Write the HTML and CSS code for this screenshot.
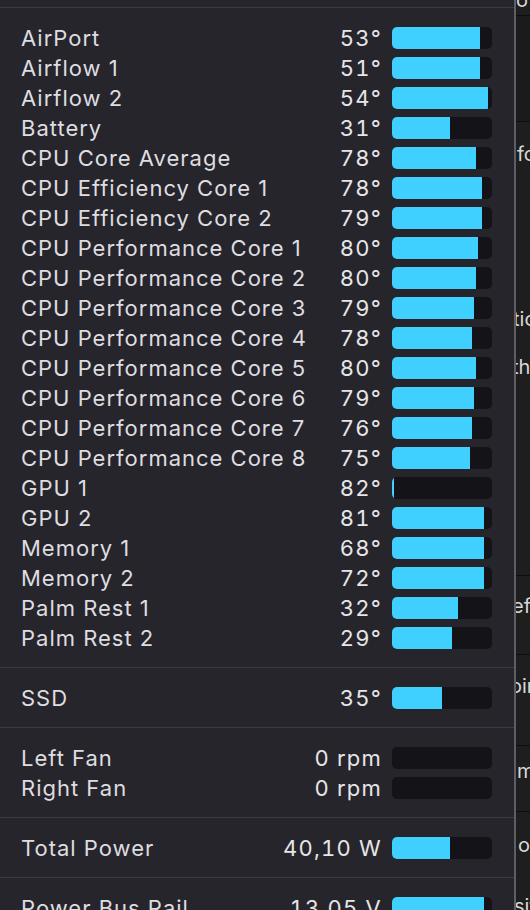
FILE: index.html
```html
<!DOCTYPE html>
<html lang="en">
<head>
    <meta charset="UTF-8">
    <meta name="viewport" content="width=device-width, initial-scale=1.0">
    <title>Sensors</title>
    <link rel="stylesheet" href="styles.css">
</head>
<body>
    <div class="panel">
        <div class="panel-top"></div>

        <div class="section">
            <div class="row"><span class="name">AirPort</span><span class="value">53°</span><div class="bar"><div class="fill" style="width: 88%"></div></div></div>
            <div class="row"><span class="name">Airflow 1</span><span class="value">51°</span><div class="bar"><div class="fill" style="width: 88%"></div></div></div>
            <div class="row"><span class="name">Airflow 2</span><span class="value">54°</span><div class="bar"><div class="fill" style="width: 96%"></div></div></div>
            <div class="row"><span class="name">Battery</span><span class="value">31°</span><div class="bar"><div class="fill" style="width: 58%"></div></div></div>
            <div class="row"><span class="name">CPU Core Average</span><span class="value">78°</span><div class="bar"><div class="fill" style="width: 84%"></div></div></div>
            <div class="row"><span class="name">CPU Efficiency Core 1</span><span class="value">78°</span><div class="bar"><div class="fill" style="width: 90%"></div></div></div>
            <div class="row"><span class="name">CPU Efficiency Core 2</span><span class="value">79°</span><div class="bar"><div class="fill" style="width: 90%"></div></div></div>
            <div class="row"><span class="name">CPU Performance Core 1</span><span class="value">80°</span><div class="bar"><div class="fill" style="width: 86%"></div></div></div>
            <div class="row"><span class="name">CPU Performance Core 2</span><span class="value">80°</span><div class="bar"><div class="fill" style="width: 84%"></div></div></div>
            <div class="row"><span class="name">CPU Performance Core 3</span><span class="value">79°</span><div class="bar"><div class="fill" style="width: 82%"></div></div></div>
            <div class="row"><span class="name">CPU Performance Core 4</span><span class="value">78°</span><div class="bar"><div class="fill" style="width: 80%"></div></div></div>
            <div class="row"><span class="name">CPU Performance Core 5</span><span class="value">80°</span><div class="bar"><div class="fill" style="width: 84%"></div></div></div>
            <div class="row"><span class="name">CPU Performance Core 6</span><span class="value">79°</span><div class="bar"><div class="fill" style="width: 82%"></div></div></div>
            <div class="row"><span class="name">CPU Performance Core 7</span><span class="value">76°</span><div class="bar"><div class="fill" style="width: 80%"></div></div></div>
            <div class="row"><span class="name">CPU Performance Core 8</span><span class="value">75°</span><div class="bar"><div class="fill" style="width: 78%"></div></div></div>
            <div class="row"><span class="name">GPU 1</span><span class="value">82°</span><div class="bar"><div class="fill" style="width: 2%"></div></div></div>
            <div class="row"><span class="name">GPU 2</span><span class="value">81°</span><div class="bar"><div class="fill" style="width: 92%"></div></div></div>
            <div class="row"><span class="name">Memory 1</span><span class="value">68°</span><div class="bar"><div class="fill" style="width: 92%"></div></div></div>
            <div class="row"><span class="name">Memory 2</span><span class="value">72°</span><div class="bar"><div class="fill" style="width: 92%"></div></div></div>
            <div class="row"><span class="name">Palm Rest 1</span><span class="value">32°</span><div class="bar"><div class="fill" style="width: 66%"></div></div></div>
            <div class="row"><span class="name">Palm Rest 2</span><span class="value">29°</span><div class="bar"><div class="fill" style="width: 60%"></div></div></div>
        </div>

        <div class="section">
            <div class="row"><span class="name">SSD</span><span class="value">35°</span><div class="bar"><div class="fill" style="width: 50%"></div></div></div>
        </div>

        <div class="section">
            <div class="row"><span class="name">Left Fan</span><span class="value">0 rpm</span><div class="bar"><div class="fill" style="width: 0%"></div></div></div>
            <div class="row"><span class="name">Right Fan</span><span class="value">0 rpm</span><div class="bar"><div class="fill" style="width: 0%"></div></div></div>
        </div>

        <div class="section">
            <div class="row"><span class="name">Total Power</span><span class="value">40,10 W</span><div class="bar"><div class="fill" style="width: 58%"></div></div></div>
        </div>

        <div class="section">
            <div class="row"><span class="name">Power Bus Rail</span><span class="value">13,05 V</span><div class="bar"><div class="fill" style="width: 92%"></div></div></div>
        </div>
    </div>

    <div class="behind">
        <div class="cell cell-a"><div class="peek peek-top">o</div></div>
        <div class="cell cell-b"></div>
        <div class="cell cell-c">
            <div class="peek peek-fo">fo</div>
            <div class="peek peek-tic">tic</div>
            <div class="peek peek-th">th</div>
        </div>
        <div class="cell cell-d"><div class="peek peek-ef">ef</div></div>
        <div class="cell cell-e"><div class="peek peek-oi">oint</div></div>
        <div class="cell cell-f"><div class="peek peek-m">m</div></div>
        <div class="cell cell-g">
            <div class="peek peek-o">o</div>
            <div class="peek peek-si">sit</div>
        </div>
    </div>
</body>
</html>
```

FILE: styles.css
```css
body {
    margin: 0;
    display: flex;
    height: 910px;
    overflow: hidden;
    background-color: #1e1e1f;
    font-family: Inter, 'Noto Sans', sans-serif;
    color: #dedde0;
}

.panel {
    width: 514px;
    flex-shrink: 0;
    background: #27252c;
    border-right: 2px solid #5f5e63;
}

.panel-top {
    height: 7px;
    border-bottom: 1px solid #3d3b42;
}

.section {
    padding: 15px 0 14px;
    border-bottom: 1px solid #3d3b42;
}

.row {
    display: flex;
    align-items: center;
    height: 30px;
    padding: 0 22px 0 21px;
    font-size: 22px;
    letter-spacing: 1px;
}

.name {
    flex: 1;
    white-space: nowrap;
}

.value {
    text-align: right;
    white-space: nowrap;
    color: #e6e5e8;
    font-variant-numeric: tabular-nums;
    letter-spacing: 1.2px;
    margin-right: -1px;
}

.bar {
    width: 100px;
    height: 22px;
    margin-left: 11px;
    flex-shrink: 0;
    border-radius: 5px;
    overflow: hidden;
    background: #141317;
}

.fill {
    height: 100%;
    background: #40d0ff;
}

/* window showing behind the menu */
.behind {
    flex: 1;
    overflow: hidden;
    font-size: 20px;
    color: #d8d8d8;
}

.cell {
    border-bottom: 1px solid #0e0e0e;
    white-space: nowrap;
}

.cell-a { height: 27px; }
.cell-b { height: 105px; background: #1b1b1c; }
.cell-c { height: 433px; }
.cell-d { height: 60px; }
.cell-e { height: 71px; }
.cell-f { height: 52px; }
.cell-g { height: 160px; border-bottom: none; }

.peek {
    height: 24px;
    line-height: 24px;
}

.peek-top { margin-top: -12px; }
.peek-fo { margin-top: 20px; margin-left: 1px; }
.peek-tic { margin-top: 141px; margin-left: -3px; }
.peek-th { margin-top: 24px; margin-left: -4px; }
.peek-ef { margin-top: 18px; margin-left: -4px; }
.peek-oi { margin-top: 19px; margin-left: -6px; }
.peek-m { margin-top: 13px; margin-left: 1px; }
.peek-o { margin-top: 21px; margin-left: 2px; }
.peek-si { margin-top: 37px; margin-left: -2px; }
```
